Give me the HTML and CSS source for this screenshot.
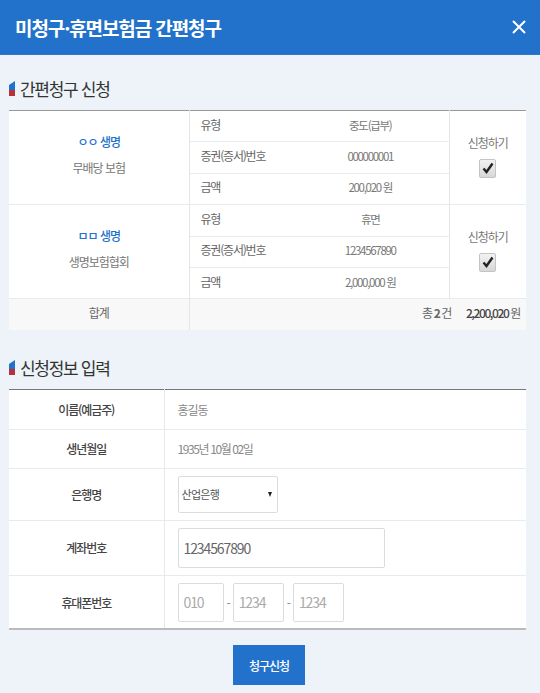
FILE: index.html
```html
<!DOCTYPE html>
<html lang="ko">
  <head>
    <meta charset="UTF-8" />
    <meta name="viewport" content="width=device-width, initial-scale=1.0" />
    <title>미청구·휴면보험금 간편청구</title>
    <link rel="stylesheet" href="styles.css">
  </head>
  <body>
    <header class="top">
      <h1>미청구·휴면보험금 간편청구</h1>
      <button type="button" class="close" aria-label="닫기">
        <svg viewBox="0 0 14 14" width="14" height="14"><path d="M1 1 L13 13 M13 1 L1 13" stroke="#fff" stroke-width="2" fill="none" /></svg>
      </button>
    </header>

    <main class="content">
      <h2 class="sec-title">
        <svg class="flag" viewBox="0 0 6 15" width="6" height="15"><path d="M0 4 L6 0 V9 H0 Z" fill="#2272cc" /><path d="M0 9 H6 V15 H0 Z" fill="#b5323c" /></svg>
        간편청구 신청
      </h2>
      <table class="claim">
        <colgroup>
          <col class="c-ins" /><col class="c-label" /><col class="c-val" /><col class="c-chk" />
        </colgroup>
        <tr>
          <td rowspan="3" class="ins">
            <p class="ins-name">ㅇㅇ 생명</p>
            <p>무배당 보험</p>
          </td>
          <td class="lbl">유형</td>
          <td class="val">중도(급부)</td>
          <td rowspan="3" class="chk">
            <p>신청하기</p>
            <span class="box"><svg viewBox="0 0 12 12" width="12" height="12"><path d="M1.5 6.5 L4.5 10 L10.5 1.5" stroke="#222" stroke-width="2.4" fill="none" /></svg></span>
          </td>
        </tr>
        <tr>
          <td class="lbl">증권(증서)번호</td>
          <td class="val">000000001</td>
        </tr>
        <tr>
          <td class="lbl">금액</td>
          <td class="val">200,020 원</td>
        </tr>
        <tr>
          <td rowspan="3" class="ins">
            <p class="ins-name">ㅁㅁ 생명</p>
            <p>생명보험협회</p>
          </td>
          <td class="lbl">유형</td>
          <td class="val">휴면</td>
          <td rowspan="3" class="chk">
            <p>신청하기</p>
            <span class="box"><svg viewBox="0 0 12 12" width="12" height="12"><path d="M1.5 6.5 L4.5 10 L10.5 1.5" stroke="#222" stroke-width="2.4" fill="none" /></svg></span>
          </td>
        </tr>
        <tr>
          <td class="lbl">증권(증서)번호</td>
          <td class="val">1234567890</td>
        </tr>
        <tr>
          <td class="lbl">금액</td>
          <td class="val">2,000,000 원</td>
        </tr>
        <tr class="sum">
          <td>합계</td>
          <td colspan="3" class="sum-val">총 <b>2</b> 건 <b class="total">2,200,020</b> 원</td>
        </tr>
      </table>

      <h2 class="sec-title second">
        <svg class="flag" viewBox="0 0 6 15" width="6" height="15"><path d="M0 4 L6 0 V9 H0 Z" fill="#2272cc" /><path d="M0 9 H6 V15 H0 Z" fill="#b5323c" /></svg>
        신청정보 입력
      </h2>
      <table class="info">
        <tr class="r-name">
          <th>이름(예금주)</th>
          <td>홍길동</td>
        </tr>
        <tr class="r-birth">
          <th>생년월일</th>
          <td class="tight">1935년 10월 02일</td>
        </tr>
        <tr class="r-bank">
          <th>은행명</th>
          <td>
            <span class="select-wrap">
              <select><option>산업은행</option></select>
            </span>
          </td>
        </tr>
        <tr class="r-acct">
          <th>계좌번호</th>
          <td><input class="acct" type="text" value="1234567890" /></td>
        </tr>
        <tr class="r-phone">
          <th>휴대폰번호</th>
          <td>
            <div class="phone">
              <input class="p1" type="text" placeholder="010" />
              <span>-</span>
              <input class="p2" type="text" placeholder="1234" />
              <span>-</span>
              <input class="p2" type="text" placeholder="1234" />
            </div>
          </td>
        </tr>
      </table>

      <div class="buttons">
        <button type="button" class="submit">청구신청</button>
      </div>
    </main>
  </body>
</html>
```

FILE: styles.css
```css
* {
  box-sizing: border-box;
}
html, body {
  height: 100%;
}
body {
  margin: 0;
  padding: 0;
  font-family: "Noto Sans CJK KR", "Noto Sans", sans-serif;
  background-color: #edf3f8;
  color: #777;
  overflow: hidden;
}
p {
  margin: 0;
}
.top {
  height: 55px;
  background: #2272cc;
  border-bottom: 1px solid #2a78d0;
  color: #fff;
  display: flex;
  align-items: center;
  justify-content: space-between;
  padding: 0 14px 0 15px;
}
.top h1 {
  margin: 0;
  font-size: 19px;
  font-weight: 700;
  letter-spacing: -1.1px;
}
.close {
  background: none;
  border: none;
  padding: 0;
  display: flex;
}
.content {
  padding: 0 14px 0 9px;
}
.sec-title {
  margin: 0;
  height: 55px;
  padding-top: 12px;
  display: flex;
  align-items: center;
  gap: 5px;
  font-size: 17px;
  font-weight: 400;
  color: #333;
  letter-spacing: -1.3px;
}
.sec-title.second {
  height: 59px;
  padding-top: 17px;
}
.flag {
  flex: none;
}
table {
  width: 517px;
  border-collapse: collapse;
  table-layout: fixed;
  background: #fff;
  font-size: 12px;
  letter-spacing: -1px;
}
.claim {
  border-top: 1px solid #999;
}
.c-ins {
  width: 180px;
}
.c-label {
  width: 113px;
}
.c-val {
  width: 147px;
}
.claim td {
  height: 31.4px;
  padding: 0;
  border-bottom: 1px solid #e6ebf0;
  vertical-align: middle;
}
.claim .ins {
  text-align: center;
  border-right: 1px solid #e2e6ea;
  font-size: 12px;
  padding-bottom: 6px;
}
.ins-name {
  color: #2272cc;
  font-weight: 500;
  margin-bottom: 9px;
}
.claim .lbl {
  padding: 0 0 4px 11px;
  color: #666;
  letter-spacing: -1.2px;
}
.claim .val {
  padding: 0 10px 3px 0;
  text-align: center;
  color: #777;
  font-size: 11.5px;
  letter-spacing: -1.3px;
}
.claim .chk {
  text-align: center;
  border-left: 1px solid #e2e6ea;
  padding-bottom: 4px;
}
.chk p {
  margin-bottom: 8px;
}
.box {
  display: inline-flex;
  align-items: center;
  justify-content: center;
  width: 17px;
  height: 19px;
  border: 1px solid #c4c4c4;
  border-radius: 2px;
  background: linear-gradient(#f2f2f2, #d8d8d8);
}
.sum td {
  height: 31px;
  background: #f8f8f8;
  border-bottom: none;
  color: #666;
  text-align: center;
  padding-bottom: 4px;
}
.sum .sum-val {
  text-align: right;
  padding-right: 6px;
  border-left: 1px solid #e2e6ea;
  letter-spacing: -1.4px;
}
.total {
  margin-left: 13px;
  color: #444;
  font-weight: 500;
}
.info {
  border-top: 1px solid #777;
  border-bottom: 2px solid #bbb;
}
.info th {
  width: 155px;
  font-weight: 500;
  color: #444;
  border-right: 1px solid #e6e9ec;
  border-bottom: 1px solid #e6ebf0;
  padding: 0;
  letter-spacing: -1.1px;
}
.info td {
  padding: 0 0 0 13px;
  border-bottom: 1px solid #e6ebf0;
  color: #888;
  letter-spacing: -1px;
}
.info .tight {
  letter-spacing: -1.4px;
}
.info tr:last-child th,
.info tr:last-child td {
  border-bottom: none;
}
.r-name {
  height: 40px;
}
.r-birth {
  height: 39px;
}
.r-bank {
  height: 52px;
}
.r-acct {
  height: 55px;
}
.r-phone {
  height: 54px;
}
.select-wrap {
  display: block;
  position: relative;
  width: 100px;
}
.select-wrap::after {
  content: "";
  position: absolute;
  right: 6px;
  top: 16px;
  border-left: 2.5px solid transparent;
  border-right: 2.5px solid transparent;
  border-top: 5px solid #222;
}
select {
  display: block;
  width: 100px;
  height: 37px;
  padding: 0 0 0 3px;
  border: 1px solid #dcdcdc;
  border-radius: 2px;
  background: #fff;
  font: inherit;
  font-size: 11px;
  letter-spacing: -0.7px;
  color: #555;
  appearance: none;
}
input {
  display: block;
  border: 1px solid #dcdcdc;
  border-radius: 2px;
  font-family: "Noto Sans CJK KR", sans-serif;
  font-size: 14px;
  color: #666;
  padding: 0 5px;
  letter-spacing: -1.1px;
}
input::placeholder {
  color: #aaa;
  opacity: 1;
}
.acct {
  width: 207px;
  height: 40px;
}
.phone {
  display: flex;
  align-items: center;
  gap: 3px;
}
.phone input {
  height: 39px;
}
.p1 {
  width: 46px;
}
.p2 {
  width: 51px;
}
.buttons {
  display: flex;
  justify-content: center;
  padding: 15px 0 0 3px;
}
.submit {
  width: 72px;
  height: 40px;
  background: #2272cc;
  color: #fff;
  border: none;
  font-family: inherit;
  font-size: 12px;
  font-weight: 500;
  letter-spacing: -1px;
  padding: 0;
}
```
